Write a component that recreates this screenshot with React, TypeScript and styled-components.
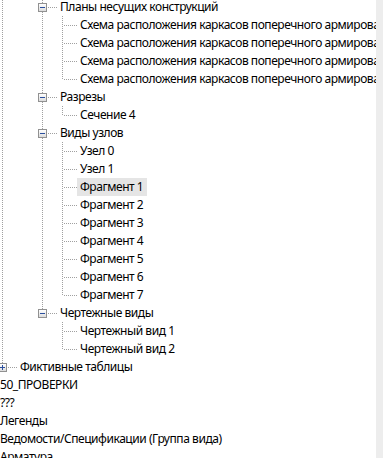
import React from 'react'
import styled, { createGlobalStyle, css } from 'styled-components'

type Node = {
  label: string
  children?: Node[]
  expanded?: boolean
  hidden?: boolean // строка выше видимой области
  selected?: boolean
}

const scheme = 'Схема расположения каркасов поперечного армирования'

// видимая часть дерева проекта
const tree: Node[] = [
  {
    label: 'Виды',
    hidden: true,
    expanded: true,
    children: [
      {
        label: 'Виды (все)',
        hidden: true,
        expanded: true,
        children: [
          {
            label: 'Узлы',
            hidden: true,
            expanded: true,
            children: [
              {
                label: 'Планы несущих конструкций',
                expanded: true,
                children: [{ label: scheme }, { label: scheme }, { label: scheme }, { label: scheme }],
              },
              { label: 'Разрезы', expanded: true, children: [{ label: 'Сечение 4' }] },
              {
                label: 'Виды узлов',
                expanded: true,
                children: [
                  { label: 'Узел 0' },
                  { label: 'Узел 1' },
                  { label: 'Фрагмент 1', selected: true },
                  { label: 'Фрагмент 2' },
                  { label: 'Фрагмент 3' },
                  { label: 'Фрагмент 4' },
                  { label: 'Фрагмент 5' },
                  { label: 'Фрагмент 6' },
                  { label: 'Фрагмент 7' },
                ],
              },
              {
                label: 'Чертежные виды',
                expanded: true,
                children: [{ label: 'Чертежный вид 1' }, { label: 'Чертежный вид 2' }],
              },
            ],
          },
        ],
      },
      { label: 'Фиктивные таблицы', children: [{ label: '...' }] },
    ],
  },
  { label: '50_ПРОВЕРКИ', children: [{ label: '...' }] },
  { label: '???', children: [{ label: '...' }] },
  { label: 'Легенды', children: [{ label: '...' }] },
  { label: 'Ведомости/Спецификации (Группа вида)', children: [{ label: '...' }] },
  { label: 'Арматура', children: [{ label: '...' }] },
  { label: 'Листы', children: [{ label: '...' }] },
]

type FlatRow = {
  node: Node
  guides: boolean[] // вертикальная линия у предков
  last: boolean
  first: boolean
}

function flatten(nodes: Node[], guides: boolean[], out: FlatRow[], topLevel: boolean) {
  nodes.forEach((node, i) => {
    const last = i === nodes.length - 1
    out.push({ node, guides, last, first: topLevel && i === 0 })
    if (node.expanded && node.children) {
      flatten(node.children, [...guides, !last], out, false)
    }
  })
  return out
}

const rows = flatten(tree, [], [], true).filter((r) => !r.node.hidden)

export default function App() {
  return (
    <>
      <GlobalStyle />
      <Page>
        <TreePane>
          <TreeList>
            {rows.map((row, i) => {
              const hasKids = !!row.node.children
              return (
                <Row key={i}>
                  {row.guides.map((g, j) => (
                    <Guide key={j} $line={g} />
                  ))}
                  <Connector $last={row.last} $first={row.first}>
                    {hasKids && <Expander $open={!!row.node.expanded} />}
                  </Connector>
                  <Label $selected={row.node.selected}>{row.node.label}</Label>
                </Row>
              )
            })}
          </TreeList>
        </TreePane>
        <ScrollTrack />
      </Page>
    </>
  )
}

const GlobalStyle = createGlobalStyle`
  html, body {
    margin: 0;
    padding: 0;
    background: #fff;
  }
  body {
    font-family: 'Noto Sans', 'Liberation Sans', sans-serif;
    font-size: 12px;
    letter-spacing: -0.45px;
    color: #000;
  }
`

const Page = styled.div`
  display: flex;
  width: 383px;
  height: 458px;
  overflow: hidden;
  background: #fff;
`

const TreePane = styled.div`
  flex: 1;
  overflow: hidden;
`

const TreeList = styled.div`
  display: flex;
  flex-direction: column;
  margin-left: -23px;
  margin-top: -2px;
`

const Row = styled.div`
  display: flex;
  height: 18px;
  flex-shrink: 0;
  white-space: nowrap;
`

const dotsV = css`
  background: repeating-linear-gradient(to bottom, #a0a0a0 0 1px, transparent 1px 2px);
`

const Guide = styled.div<{ $line: boolean }>`
  position: relative;
  width: 20px;
  flex-shrink: 0;
  ${(p) =>
    p.$line &&
    css`
      &::before {
        content: '';
        position: absolute;
        left: 5px;
        top: 0;
        bottom: 0;
        width: 1px;
        ${dotsV}
      }
    `}
`

const Connector = styled.div<{ $last: boolean; $first: boolean }>`
  position: relative;
  width: 20px;
  flex-shrink: 0;

  &::before {
    content: '';
    position: absolute;
    left: 5px;
    width: 1px;
    top: ${(p) => (p.$first ? '9px' : '0')};
    height: ${(p) => (p.$last ? '10px' : '18px')};
    ${dotsV}
  }

  &::after {
    content: '';
    position: absolute;
    left: 7px;
    right: 0;
    top: 9px;
    height: 1px;
    background: repeating-linear-gradient(to right, #a0a0a0 0 1px, transparent 1px 2px);
  }
`

const Expander = styled.span<{ $open: boolean }>`
  position: absolute;
  z-index: 1;
  left: 1px;
  top: 5px;
  width: 9px;
  height: 9px;
  box-sizing: border-box;
  border: 1px solid #919191;
  background: linear-gradient(#ffffff, #dcdcdc);

  &::before {
    content: '';
    position: absolute;
    left: 1px;
    top: 3px;
    width: 5px;
    height: 1px;
    background: #2b4f9e;
  }

  ${(p) =>
    !p.$open &&
    css`
      &::after {
        content: '';
        position: absolute;
        left: 3px;
        top: 1px;
        width: 1px;
        height: 5px;
        background: #2b4f9e;
      }
    `}
`

const Label = styled.span<{ $selected?: boolean }>`
  display: block;
  padding: 0 4px 0 3px;
  line-height: 18px;
  height: 18px;
  background: ${(p) => (p.$selected ? '#e5e5e5' : 'transparent')};
`

const ScrollTrack = styled.div`
  width: 7px;
  flex-shrink: 0;
  background: #ededed;
`
